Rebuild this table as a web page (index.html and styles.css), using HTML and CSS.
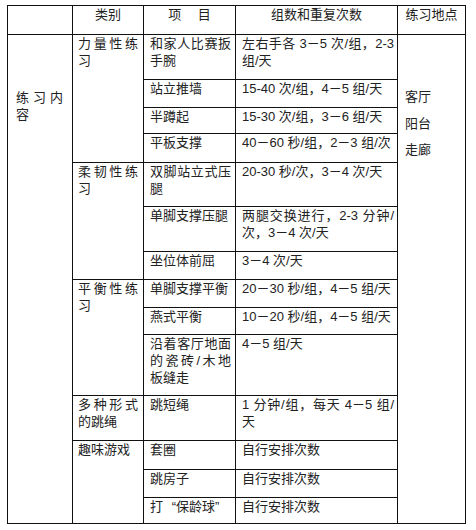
FILE: index.html
```html
<!DOCTYPE html>
<html lang="zh-CN">
<head>
<meta charset="utf-8">
<title>练习内容</title>
<link rel="stylesheet" href="styles.css">
</head>
<body>
<table class="plan">
  <colgroup>
    <col class="c1"><col class="c2"><col class="c3"><col class="c4"><col class="c5">
  </colgroup>
  <tr class="h29">
    <th></th>
    <th>类别</th>
    <th class="th-item">项　 目</th>
    <th>组数和重复次数</th>
    <th>练习地点</th>
  </tr>
  <tr class="h45">
    <td rowspan="14" class="group">练习内容</td>
    <td rowspan="4" class="cat">力量性练习</td>
    <td class="item">和家人比赛扳手腕</td>
    <td class="dose"><span class="ln fill">左右手各 3－5 次/组，2-3</span><span class="ln">组/天</span></td>
    <td rowspan="14" class="place"><span class="pl">客厅</span><span class="pl">阳台</span><span class="pl">走廊</span></td>
  </tr>
  <tr class="h28">
    <td class="item">站立推墙</td>
    <td class="dose"><span class="ln">15-40 次/组，4－5 组/天</span></td>
  </tr>
  <tr class="h26">
    <td class="item">半蹲起</td>
    <td class="dose"><span class="ln">15-30 次/组，3－6 组/天</span></td>
  </tr>
  <tr class="h29">
    <td class="item">平板支撑</td>
    <td class="dose"><span class="ln">40－60 秒/组，2－3 组/次</span></td>
  </tr>
  <tr class="h44">
    <td rowspan="3" class="cat">柔韧性练习</td>
    <td class="item">双脚站立式压腿</td>
    <td class="dose"><span class="ln">20-30 秒/次，3－4 次/天</span></td>
  </tr>
  <tr class="h45">
    <td class="item">单脚支撑压腿</td>
    <td class="dose"><span class="ln fill">两腿交换进行，2-3 分钟/</span><span class="ln">次，3－4 次/天</span></td>
  </tr>
  <tr class="h28">
    <td class="item">坐位体前屈</td>
    <td class="dose"><span class="ln">3－4 次/天</span></td>
  </tr>
  <tr class="h28">
    <td rowspan="3" class="cat">平衡性练习</td>
    <td class="item">单脚支撑平衡</td>
    <td class="dose"><span class="ln">20－30 秒/组，4－5 组/天</span></td>
  </tr>
  <tr class="h27">
    <td class="item">燕式平衡</td>
    <td class="dose"><span class="ln">10－20 秒/组，4－5 组/天</span></td>
  </tr>
  <tr class="h61">
    <td class="item">沿着客厅地面的瓷砖/木地板缝走</td>
    <td class="dose"><span class="ln">4－5 组/天</span></td>
  </tr>
  <tr class="h45">
    <td class="cat">多种形式的跳绳</td>
    <td class="item">跳短绳</td>
    <td class="dose"><span class="ln fill">1 分钟/组，每天 4－5 组/</span><span class="ln">天</span></td>
  </tr>
  <tr class="h29">
    <td rowspan="3" class="cat">趣味游戏</td>
    <td class="item">套圈</td>
    <td class="dose"><span class="ln">自行安排次数</span></td>
  </tr>
  <tr class="h28">
    <td class="item">跳房子</td>
    <td class="dose"><span class="ln">自行安排次数</span></td>
  </tr>
  <tr class="h26">
    <td class="item">打<span class="q ql">“</span>保龄球<span class="q qr">”</span></td>
    <td class="dose"><span class="ln">自行安排次数</span></td>
  </tr>
</table>
</body>
</html>
```

FILE: styles.css
```css
html, body {
  margin: 0;
  padding: 0;
  background: #ffffff;
}

body {
  font-family: "Liberation Sans", "Noto Sans CJK SC", sans-serif;
  font-size: 13px;
  line-height: 17px;
  color: #222222;
}

.plan {
  border-collapse: collapse;
  table-layout: fixed;
  width: 458px;
  margin: 5px 0 0 7px;
}

.c1 { width: 65px; }
.c2 { width: 71px; }
.c3 { width: 92px; }
.c4 { width: 162px; }
.c5 { width: 68px; }

.plan th,
.plan td {
  border: 1px solid #111111;
  padding: 0 4px 0 6px;
  vertical-align: top;
  text-align: justify;
  font-weight: normal;
}

.plan th {
  text-align: center;
  padding: 0 2px;
}

.h26 { height: 26px; }
.h27 { height: 27px; }
.h28 { height: 28px; }
.h29 { height: 29px; }
.h44 { height: 44px; }
.h45 { height: 45px; }
.h61 { height: 61px; }

.plan .group {
  padding: 54px 9px 0 8px;
}

.plan .cat {
  padding-left: 5px;
  padding-right: 5px;
}

.plan .item {
  padding-left: 6px;
  padding-right: 4px;
}

.plan .dose {
  padding-left: 6px;
  padding-right: 3px;
}

.ln {
  display: block;
  white-space: nowrap;
}

.ln.fill {
  text-align: justify;
  text-align-last: justify;
}

.plan .place {
  padding: 49px 4px 0 7px;
}

.pl {
  display: block;
  line-height: 26.5px;
}

.q {
  display: inline-block;
  width: 13px;
}

.ql {
  text-align: right;
}

.qr {
  text-align: left;
}
```
